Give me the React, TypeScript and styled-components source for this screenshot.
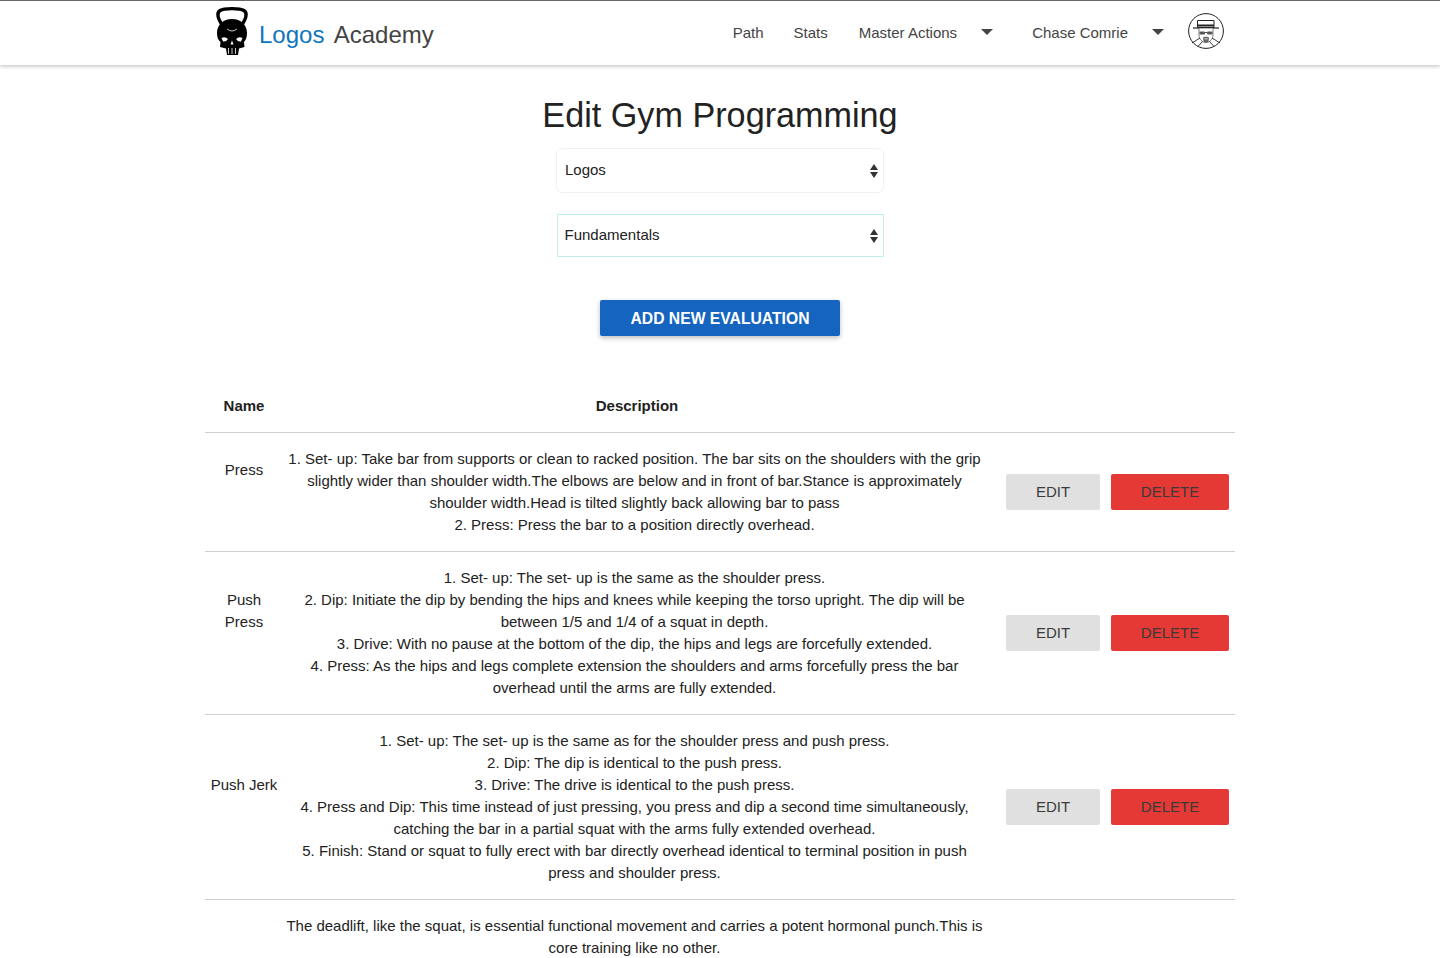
import styled, { createGlobalStyle } from 'styled-components';

const GlobalStyle = createGlobalStyle`
  html, body {
    margin: 0;
    height: 100%;
    overflow: hidden;
    background: #ffffff;
    color: #222222;
    font-family: "Liberation Sans", Arial, sans-serif;
  }
`;

const Navbar = styled.header`
  height: 65px;
  box-sizing: border-box;
  border-top: 1px solid #666666;
  background: #ffffff;
  box-shadow: 0 1px 4px rgba(0, 0, 0, 0.28);
  display: flex;
  justify-content: center;
`;

const NavInner = styled.div`
  width: 1030px;
  display: flex;
  align-items: flex-start;
  justify-content: space-between;
`;

const Brand = styled.a`
  display: flex;
  align-items: flex-start;
  padding: 5px 0 0 10px;
  gap: 9px;
  font-size: 24px;
  text-decoration: none;
`;

const BrandText = styled.span`
  margin-top: 14px;
  line-height: 30px;
  color: #444444;
  word-spacing: 4px;

  b {
    font-weight: 400;
    color: #0d76bd;
  }
`;

const NavLinks = styled.nav`
  display: flex;
  align-items: center;
  height: 60px;
  padding-right: 11px;
  font-size: 15px;
  color: #444444;
`;

const NavLink = styled.a<{ $gap?: number }>`
  margin-top: 2px;
  margin-right: ${props => props.$gap ?? 30}px;
  white-space: nowrap;
`;

const Caret = styled.span<{ $gap: number }>`
  width: 0;
  height: 0;
  margin: 2px ${props => props.$gap}px 0 24px;
  border-left: 6px solid transparent;
  border-right: 6px solid transparent;
  border-top: 6px solid #444444;
`;

const Main = styled.main`
  width: 1030px;
  margin: 0 auto;
`;

const Title = styled.h1`
  margin: 29px 0 0;
  font-size: 34.2px;
  line-height: 42px;
  font-weight: 400;
  text-align: center;
  color: #222222;
`;

const SelectStack = styled.div`
  display: flex;
  flex-direction: column;
  align-items: center;
  margin-top: 12px;
`;

const SelectWrap = styled.div<{ $focused?: boolean }>`
  position: relative;
  width: ${props => (props.$focused ? 327 : 328)}px;
  height: ${props => (props.$focused ? 43 : 45)}px;
  margin-top: ${props => (props.$focused ? 21 : 0)}px;
`;

const Select = styled.select<{ $focused?: boolean }>`
  appearance: none;
  width: 100%;
  height: 100%;
  box-sizing: border-box;
  padding: 0 24px 2px ${props => (props.$focused ? 7 : 8)}px;
  background: #ffffff;
  border: 1px solid ${props => (props.$focused ? '#bdeeea' : '#f0f0f0')};
  border-radius: ${props => (props.$focused ? 1 : 6)}px;
  outline: none;
  font-family: inherit;
  font-size: 15px;
  color: #222222;
`;

const SelectArrows = styled.svg`
  position: absolute;
  top: 50%;
  right: 6px;
  width: 8px;
  height: 14px;
  margin-top: -7px;
  pointer-events: none;
`;

const AddRow = styled.div`
  display: flex;
  justify-content: center;
  margin-top: 43px;
`;

const Button = styled.button<{ $variant: 'primary' | 'edit' | 'delete' }>`
  height: 36px;
  padding: ${props => (props.$variant === 'primary' ? '1px 0 0' : '0 0 2px')};
  border: none;
  border-radius: 2px;
  font-family: inherit;
  font-size: ${props => (props.$variant === 'primary' ? 15.7 : 15)}px;
  font-weight: ${props => (props.$variant === 'primary' ? 600 : 400)};
  width: ${props => (props.$variant === 'primary' ? 240 : props.$variant === 'edit' ? 94 : 118)}px;
  color: ${props => (props.$variant === 'primary' ? '#ffffff' : '#3a3a3a')};
  background: ${props =>
    props.$variant === 'primary' ? '#1565c0' : props.$variant === 'edit' ? '#e0e0e0' : '#e53935'};
  box-shadow: ${props => (props.$variant === 'primary' ? '0 2px 5px rgba(0, 0, 0, 0.26)' : 'none')};
`;

const Table = styled.table`
  width: 1030px;
  margin-top: 44px;
  border-collapse: collapse;
  table-layout: fixed;
  font-size: 15px;
  line-height: 22px;
`;

const HeadCell = styled.th<{ $width?: number; $inset?: number }>`
  box-sizing: border-box;
  width: ${props => (props.$width ? `${props.$width}px` : 'auto')};
  padding: 15px 5px 15px ${props => 5 + (props.$inset ?? 0)}px;
  text-align: center;
  font-weight: 700;
  color: #222222;
`;

const Row = styled.tr`
  border-top: 1px solid #cfcfcf;
`;

const NameCell = styled.td`
  padding: 15px 5px 59px;
  text-align: center;
  vertical-align: middle;
`;

const DescriptionCell = styled.td`
  padding: 15px 3px;
  text-align: center;
  vertical-align: middle;
`;

const Steps = styled.ol`
  margin: 0;
  padding: 0;
  list-style-position: inside;
`;

const Paragraph = styled.p`
  margin: 0;
`;

const ActionsCell = styled.td`
  padding: 15px 6px 15px 0;
  vertical-align: middle;
`;

const Actions = styled.div`
  display: flex;
  justify-content: flex-end;
  gap: 11px;
`;

function KettlebellSkull() {
  return (
    <svg width="35" height="50" viewBox="0 0 35 50" aria-hidden="true">
      <path
        d="M8 20 C3 13 1 7 5 4.5 C9 2 25 2 29 4.5 C33 7 31 13 26 20"
        fill="none"
        stroke="#000"
        strokeWidth="3.4"
      />
      <path
        d="M17 13 C26 13 32 19 32 27 C32 31 31 34 29 36 L29.5 41 L24 42.5 L23 49 L12 49 L11 42.5 L5 41 L5.5 36 C3 34 2 31 2 27 C2 19 8 13 17 13 Z"
        fill="#000"
      />
      <path d="M6.5 32 Q10 30 13 33 Q11 36 8 35.5 Z" fill="#fff" />
      <path d="M27.5 32 Q24 30 21 33 Q23 36 26 35.5 Z" fill="#fff" />
      <path d="M17 34.5 L15.5 38.5 L18.5 38.5 Z" fill="#fff" />
      <path d="M13.5 42 V48 M17 42 V48 M20.5 42 V48" stroke="#fff" strokeWidth="0.8" />
      <path d="M12 23 Q17 27 22 23" fill="none" stroke="#fff" strokeWidth="0.8" />
    </svg>
  );
}

function HeisenbergAvatar() {
  return (
    <svg width="36" height="36" viewBox="0 0 36 36" aria-hidden="true">
      <circle cx="18" cy="18" r="17.4" fill="#fff" stroke="#222" strokeWidth="1" />
      <path d="M9.5 7.5 H26 L26 14.5 H9.5 Z" fill="#fff" stroke="#222" strokeWidth="1" />
      <rect x="9.5" y="11.5" width="16.5" height="2" fill="#222" />
      <path d="M5 15 H31" stroke="#222" strokeWidth="1.2" />
      <path d="M11 15.5 V22 C11 26 14 29.5 18 29.5 C22 29.5 25 26 25 22 V15.5" fill="#fff" stroke="#444" strokeWidth="0.7" />
      <rect x="11.5" y="18.5" width="5.5" height="3" rx="1" fill="#555" />
      <rect x="19" y="18.5" width="5.5" height="3" rx="1" fill="#555" />
      <path d="M17 19.5 H19" stroke="#222" strokeWidth="0.8" />
      <path d="M15 24.5 C16 23.5 20 23.5 21 24.5 L20.5 28.5 C20 30 16 30 15.5 28.5 Z" fill="#666" />
      <path d="M16.5 25.8 H19.5" stroke="#fff" strokeWidth="0.8" />
      <path d="M4 30 L12 25 M32 30 L24 25 M10 33.5 L14.5 28.5 M26 33.5 L21.5 28.5" stroke="#222" strokeWidth="0.9" />
    </svg>
  );
}

function UpDownArrows() {
  return (
    <SelectArrows viewBox="0 0 8 14" aria-hidden="true">
      <path d="M4 0 L8 6 H0 Z M0 8 H8 L4 14 Z" fill="#333333" />
    </SelectArrows>
  );
}

interface Movement {
  name: string;
  steps: string[];
}

const movements: Movement[] = [
  {
    name: 'Press',
    steps: [
      'Set- up: Take bar from supports or clean to racked position. The bar sits on the shoulders with the grip slightly wider than shoulder width.The elbows are below and in front of bar.Stance is approximately shoulder width.Head is tilted slightly back allowing bar to pass',
      'Press: Press the bar to a position directly overhead.',
    ],
  },
  {
    name: 'Push Press',
    steps: [
      'Set- up: The set- up is the same as the shoulder press.',
      'Dip: Initiate the dip by bending the hips and knees while keeping the torso upright. The dip will be between 1/5 and 1/4 of a squat in depth.',
      'Drive: With no pause at the bottom of the dip, the hips and legs are forcefully extended.',
      'Press: As the hips and legs complete extension the shoulders and arms forcefully press the bar overhead until the arms are fully extended.',
    ],
  },
  {
    name: 'Push Jerk',
    steps: [
      'Set- up: The set- up is the same as for the shoulder press and push press.',
      'Dip: The dip is identical to the push press.',
      'Drive: The drive is identical to the push press.',
      'Press and Dip: This time instead of just pressing, you press and dip a second time simultaneously, catching the bar in a partial squat with the arms fully extended overhead.',
      'Finish: Stand or squat to fully erect with bar directly overhead identical to terminal position in push press and shoulder press.',
    ],
  },
];

export default function App() {
  return (
    <>
      <GlobalStyle />
      <Navbar>
        <NavInner>
          <Brand>
            <KettlebellSkull />
            <BrandText>
              <b>Logos</b> Academy
            </BrandText>
          </Brand>
          <NavLinks>
            <NavLink>Path</NavLink>
            <NavLink $gap={31}>Stats</NavLink>
            <NavLink $gap={0}>Master Actions</NavLink>
            <Caret $gap={39} />
            <NavLink $gap={0}>Chase Comrie</NavLink>
            <Caret $gap={24} />
            <HeisenbergAvatar />
          </NavLinks>
        </NavInner>
      </Navbar>
      <Main>
        <Title>Edit Gym Programming</Title>
        <SelectStack>
          <SelectWrap>
            <Select defaultValue="Logos">
              <option>Logos</option>
            </Select>
            <UpDownArrows />
          </SelectWrap>
          <SelectWrap $focused>
            <Select $focused defaultValue="Fundamentals">
              <option>Fundamentals</option>
            </Select>
            <UpDownArrows />
          </SelectWrap>
        </SelectStack>
        <AddRow>
          <Button $variant="primary">ADD NEW EVALUATION</Button>
        </AddRow>
        <Table>
          <thead>
            <tr>
              <HeadCell $width={78}>Name</HeadCell>
              <HeadCell $width={703} $inset={5}>
                Description
              </HeadCell>
              <HeadCell />
            </tr>
          </thead>
          <tbody>
            {movements.map(movement => (
              <Row key={movement.name}>
                <NameCell>{movement.name}</NameCell>
                <DescriptionCell>
                  <Steps>
                    {movement.steps.map(step => (
                      <li key={step}>{step}</li>
                    ))}
                  </Steps>
                </DescriptionCell>
                <ActionsCell>
                  <Actions>
                    <Button $variant="edit">EDIT</Button>
                    <Button $variant="delete">DELETE</Button>
                  </Actions>
                </ActionsCell>
              </Row>
            ))}
            <Row>
              <NameCell />
              <DescriptionCell>
                <Paragraph>
                  The deadlift, like the squat, is essential functional movement and carries a potent
                  hormonal punch.This is core training like no other.
                </Paragraph>
              </DescriptionCell>
              <ActionsCell />
            </Row>
          </tbody>
        </Table>
      </Main>
    </>
  );
}
